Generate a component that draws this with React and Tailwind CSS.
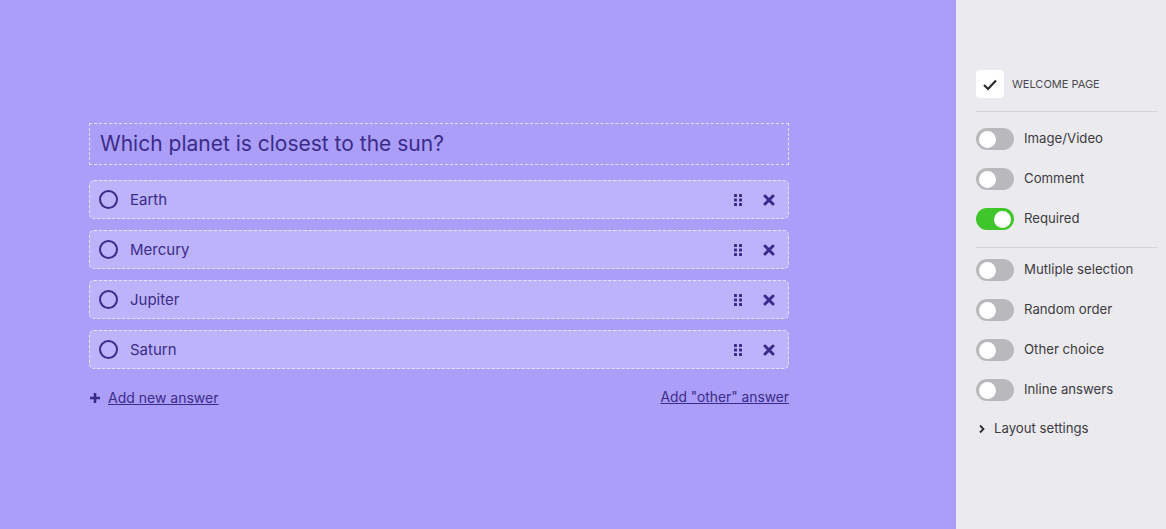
import React from "react";

const options = ["Earth", "Mercury", "Jupiter", "Saturn"];

function Toggle({ on, label }) {
  return (
    <div className="flex items-center h-[40px]">
      <div className={`w-[38px] h-[22px] rounded-full flex items-center px-[3px] ${on ? "bg-[#3ec62b] justify-end" : "bg-[#b9b9bc] justify-start"}`}>
        <div className="w-[17px] h-[17px] rounded-full bg-white" />
      </div>
      <span className="ml-[10px] text-[13.2px] text-[#3b3b3f]">{label}</span>
    </div>
  );
}

function DragIcon() {
  return (
    <svg width="10" height="13" viewBox="0 0 10 13" className="text-[#3a2a8c]">
      {[0, 1, 2].map((r) =>
        [0, 1].map((c) => (
          <rect key={`${r}-${c}`} x={1 + c * 5} y={1 + r * 4.5} width="3" height="3" rx="0.6" fill="currentColor" />
        ))
      )}
    </svg>
  );
}

function XIcon() {
  return (
    <svg width="12" height="12" viewBox="0 0 12 12">
      <path d="M2 2 L10 10 M10 2 L2 10" stroke="#3a2a8c" strokeWidth="3" strokeLinecap="round" />
    </svg>
  );
}

export default function App() {
  return (
    <div className="flex w-[1166px] h-[529px] overflow-hidden" style={{ fontFamily: "Inter, 'Open Sans', sans-serif" }}>
      <div className="w-[956px] h-full bg-[#ab9ef9] pl-[89px] pt-[123px]">
        <div className="w-[700px]">
          <div className="h-[42px] border border-dashed border-[#e4defd] flex items-center pl-[10px] text-[21px] text-[#3b2b8a]">
            Which planet is closest to the sun?
          </div>
          <div className="mt-[15px] flex flex-col gap-[11px]">
            {options.map((o) => (
              <div key={o} className="h-[39px] rounded-[5px] border border-dashed border-[#e8e3fe] bg-[#bdb3fb] flex items-center pl-[9px] pr-[13px]">
                <div className="w-[19px] h-[19px] rounded-full border-2 border-[#3b2b8a]" />
                <span className="ml-[12px] mt-[2px] text-[15px] text-[#3b2b8a]">{o}</span>
                <div className="ml-auto flex items-center gap-[20px]">
                  <DragIcon />
                  <XIcon />
                </div>
              </div>
            ))}
          </div>
          <div className="mt-[18px] flex items-center justify-between text-[14px] text-[#3b2b8a]">
            <div className="flex items-center">
              <svg width="12" height="12" viewBox="0 0 12 12">
                <path d="M6 1 V11 M1 6 H11" stroke="#3b2b8a" strokeWidth="2.6" />
              </svg>
              <span className="ml-[7px] underline">Add new answer</span>
            </div>
            <span className="underline text-[13.8px]">Add "other" answer</span>
          </div>
        </div>
      </div>
      <div className="flex-1 h-full bg-[#ebeaef] pl-[20px] pr-[9px] pt-[70px]">
        <div className="flex items-center">
          <div className="w-[28px] h-[28px] rounded-[4px] bg-white flex items-center justify-center">
            <svg width="16" height="13" viewBox="0 0 16 13">
              <path d="M2 7 L6 11 L14 2.5" stroke="#2c2c30" strokeWidth="2.2" fill="none" />
            </svg>
          </div>
          <span className="ml-[8px] text-[11px] text-[#4a4a50]">WELCOME PAGE</span>
        </div>
        <div className="mt-[13px] h-px bg-[#d4d3d9]" />
        <div className="mt-[7px]">
          <Toggle label="Image/Video" />
          <Toggle label="Comment" />
          <Toggle on label="Required" />
        </div>
        <div className="mt-[8px] h-px bg-[#d4d3d9]" />
        <div className="mt-[2px]">
          <Toggle label="Mutliple selection" />
          <Toggle label="Random order" />
          <Toggle label="Other choice" />
          <Toggle label="Inline answers" />
        </div>
        <div className="mt-[9px] flex items-center pl-[2px] text-[13.2px] text-[#3b3b3f]">
          <svg width="8" height="10" viewBox="0 0 8 10">
            <path d="M2 1.5 L5.5 5 L2 8.5" stroke="#2c2c30" strokeWidth="1.8" fill="none" />
          </svg>
          <span className="ml-[8px]">Layout settings</span>
        </div>
      </div>
    </div>
  );
}
